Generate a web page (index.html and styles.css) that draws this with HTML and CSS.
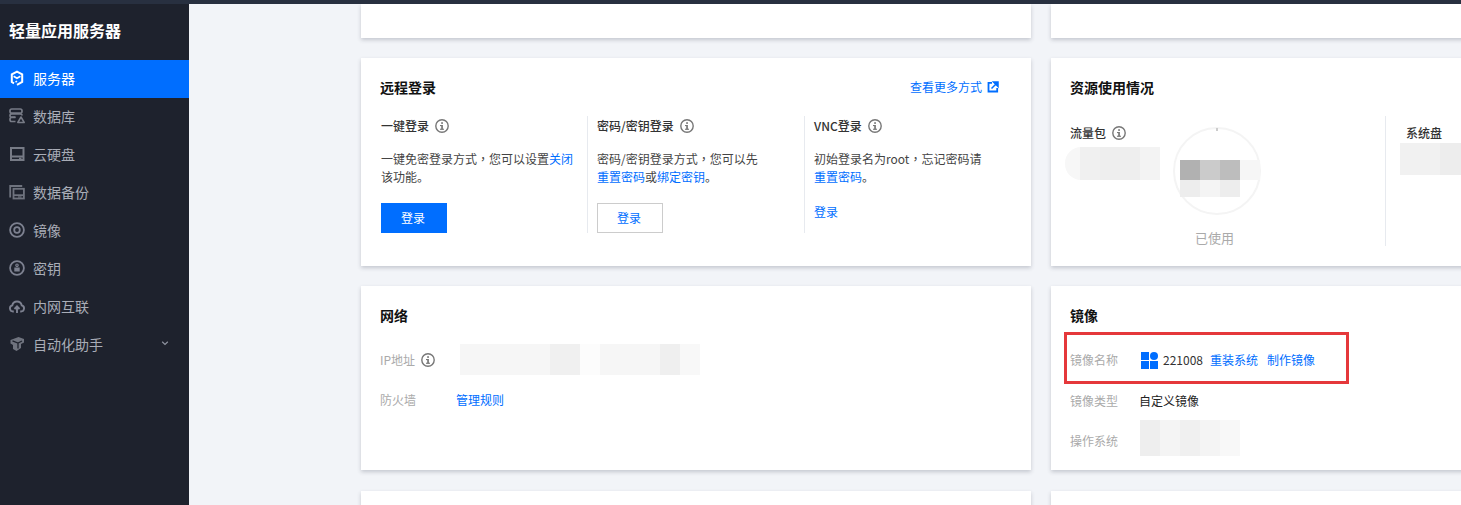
FILE: index.html
```html
<!DOCTYPE html>
<html lang="zh-CN">
<head>
<meta charset="utf-8">
<title>轻量应用服务器</title>
<link rel="stylesheet" href="styles.css">
</head>
<body>
<div class="topbar"></div>
<div class="shell">
  <aside class="sidebar">
    <h1 class="brand">轻量应用服务器</h1>
    <nav class="nav">
      <a class="nav-item active">
        <svg class="nav-icon" viewBox="0 0 16 16" fill="none" stroke="#fff" stroke-width="2"><path d="M5 13.300 2.800 12V4.400L8 1.600l5.200 2.800V12L8 14.800"/><path d="M4.600 6.200 8 8.200l3.400-2" stroke-width="1.600"/><path d="M6.500 12.200 8 11.200" stroke-width="1.600"/></svg>
        <span>服务器</span>
      </a>
      <a class="nav-item">
        <svg class="nav-icon" viewBox="0 0 16 16" fill="none" stroke="#777b86" stroke-width="1.700"><rect x="1" y="1" width="12" height="4.200" rx="1.700"/><path d="M13 7.500a1.700 1.700 0 0 0-1.700-1.700H2.700A1.700 1.700 0 0 0 1 7.500v0a1.700 1.700 0 0 0 1.700 1.700h3.800"/><path d="M6.500 9.500H2.700A1.700 1.700 0 0 0 1 11.200v.6a1.700 1.700 0 0 0 1.700 1.700h3.800"/><path d="M12 9 15.200 14.500H8.800Z" stroke-width="1.500" stroke-linejoin="round"/></svg>
        <span>数据库</span>
      </a>
      <a class="nav-item">
        <svg class="nav-icon" viewBox="0 0 16 16" fill="none" stroke="#777b86" stroke-width="2"><rect x="2" y="2" width="12.500" height="12"/><path d="M2 10.500h12.500"/><path d="M10 12.300h2.500" stroke-width="1.400"/></svg>
        <span>云硬盘</span>
      </a>
      <a class="nav-item">
        <svg class="nav-icon" viewBox="0 0 16 16" fill="none" stroke="#6f737e" stroke-width="1.800"><path d="M1.200 13.500V2h12"/><rect x="4.500" y="4.800" width="10.400" height="9.700"/><path d="M4.500 11.200h10.400"/><path d="M9 13h3.500" stroke-width="1.200"/></svg>
        <span>数据备份</span>
      </a>
      <a class="nav-item">
        <svg class="nav-icon" viewBox="0 0 16 16" fill="none" stroke="#7d8190" stroke-width="1.800"><circle cx="8" cy="8" r="6.900"/><circle cx="8" cy="8" r="2.800"/></svg>
        <span>镜像</span>
      </a>
      <a class="nav-item">
        <svg class="nav-icon" viewBox="0 0 16 16" fill="none" stroke="#7d8190" stroke-width="1.800"><circle cx="8" cy="8" r="6.900"/><circle cx="8" cy="5.200" r="1.200" stroke-width="1.200"/><rect x="5.300" y="7.500" width="5.400" height="4" fill="#7d8190" stroke="none"/></svg>
        <span>密钥</span>
      </a>
      <a class="nav-item">
        <svg class="nav-icon" viewBox="0 0 16 16" fill="none" stroke="#7d8190" stroke-width="1.900"><path d="M4.800 13.500H4A3.100 3.100 0 0 1 3.300 7.400 4.800 4.800 0 0 1 12.700 7.400 3.100 3.100 0 0 1 12 13.500H11.200"/><path d="M8 15V8.500M5.500 11 8 8.400l2.500 2.600"/></svg>
        <span>内网互联</span>
      </a>
      <a class="nav-item">
        <svg class="nav-icon" viewBox="0 0 16 16"><path d="M9.500 1 15 3v3.500L12 8v4l-4.500 3L4 13V9L1.500 7.500V4Z" fill="#6f737e"/><path d="M3.500 4.800 9 7l4-2M9 7v5.500" stroke="#1e222d" stroke-width="1.300" fill="none"/></svg>
        <span>自动化助手</span>
        <svg class="nav-caret" viewBox="0 0 8 8"><path d="M1.200 2.800 4 5.500l2.800-2.700" fill="none" stroke="#8f94a0" stroke-width="1.200"/></svg>
      </a>
    </nav>
  </aside>

  <main class="main">
    <div class="grid">
      <section class="card card-top"></section>
      <section class="card card-top"></section>

      <section class="card card-login">
        <header class="card-head">
          <h2 class="card-title">远程登录</h2>
          <a class="link more">查看更多方式
            <svg class="ext" viewBox="0 0 12 12"><path d="M5 1.800H1.500v8.700h8.700V7" fill="none" stroke="#006eff" stroke-width="1.800"/><path d="M6.500 1H11v4.500ZM8.500 3.500 4.500 7.500" fill="#006eff" stroke="#006eff" stroke-width="1.500"/></svg>
          </a>
        </header>
        <div class="login-cols">
          <div class="login-col">
            <h3 class="sub">一键登录 <svg class="info" viewBox="0 0 14 14"><use href="#i"/></svg></h3>
            <p class="desc">一键免密登录方式<span class="comma" lang="zh-TW">，</span>您可以设置<a class="link">关闭</a>该功能。</p>
            <button class="btn btn-primary">登录</button>
          </div>
          <div class="login-col">
            <h3 class="sub">密码/密钥登录 <svg class="info" viewBox="0 0 14 14"><use href="#i"/></svg></h3>
            <p class="desc">密码/密钥登录方式<span class="comma" lang="zh-TW">，</span>您可以先<br><a class="link">重置密码</a>或<a class="link">绑定密钥</a>。</p>
            <button class="btn btn-outline">登录</button>
          </div>
          <div class="login-col">
            <h3 class="sub">VNC登录 <svg class="info" viewBox="0 0 14 14"><use href="#i"/></svg></h3>
            <p class="desc">初始登录名为root<span class="comma" lang="zh-TW">，</span>忘记密码请<br><a class="link">重置密码</a>。</p>
            <a class="link text-btn">登录</a>
          </div>
        </div>
      </section>

      <section class="card card-usage">
        <h2 class="card-title">资源使用情况</h2>
        <div class="usage-cols">
          <div class="usage-col">
            <h3 class="sub tight">流量包 <svg class="info" viewBox="0 0 14 14"><use href="#i"/></svg></h3>
            <div class="ring"></div>
            <div class="ring-label">已使用</div>
            <div class="mosaic m-traffic"><i></i><i></i><i></i><i></i></div>
            <div class="mosaic m-center">
              <i class="g1"></i><i class="g2"></i><i class="g3"></i><i class="g4"></i>
              <i class="g5"></i><i class="g6"></i><i class="g7"></i><i class="g8"></i>
            </div>
          </div>
          <div class="usage-col usage-side">
            <h3 class="sub tight">系统盘</h3>
            <div class="mosaic m-disk"><i></i><i></i><i></i></div>
          </div>
        </div>
      </section>

      <section class="card card-net">
        <h2 class="card-title">网络</h2>
        <dl class="rows">
          <div class="row row-ip">
            <dt>IP地址 <svg class="info" viewBox="0 0 14 14"><use href="#i"/></svg></dt>
            <dd class="mosaic m-ip"><i></i><i></i><i></i><i></i><i></i><i></i><i></i><i></i></dd>
          </div>
          <div class="row row-fw">
            <dt>防火墙</dt>
            <dd><a class="link">管理规则</a></dd>
          </div>
        </dl>
      </section>

      <section class="card card-image">
        <h2 class="card-title">镜像</h2>
        <dl class="rows rows-image">
          <div class="row row-img">
            <dt>镜像名称</dt>
            <dd class="img-name">
              <svg class="win" viewBox="0 0 17 17"><rect x="0" y="0" width="8" height="8" fill="#006eff"/><circle cx="13" cy="4" r="4" fill="#006eff"/><rect x="0" y="9" width="8" height="8" fill="#006eff"/><rect x="9" y="9" width="8" height="8" fill="#006eff"/></svg>
              <span>221008</span><a class="link">重装系统</a><a class="link">制作镜像</a>
            </dd>
            <div class="highlight"></div>
          </div>
          <div class="row"><dt>镜像类型</dt><dd class="plain">自定义镜像</dd></div>
          <div class="row">
            <dt>操作系统</dt>
            <dd class="mosaic m-os"><i></i><i></i><i></i><i></i><i></i></dd>
          </div>
        </dl>
      </section>

      <section class="card card-bottom"></section>
      <section class="card card-bottom"></section>
    </div>
  </main>
</div>
<svg class="defs" width="0" height="0"><defs><g id="i"><circle cx="7" cy="7" r="6.200" fill="none" stroke="#777" stroke-width="1.400"/><rect x="6.200" y="6" width="1.700" height="4.500" fill="#777"/><rect x="6.200" y="3.200" width="1.700" height="1.700" fill="#777"/><rect x="5" y="6" width="2" height="1.100" fill="#777"/><rect x="5" y="9.700" width="4" height="1.100" fill="#777"/></g></defs></svg>
</body>
</html>
```
FILE: styles.css
```css
* { box-sizing: border-box; margin: 0; padding: 0; }
html, body { height: 100%; overflow: hidden; }
body {
  font-family: "Noto Sans CJK SC", "Liberation Sans", sans-serif;
  font-size: 12px;
  line-height: 18px;
  color: #333;
  background: #f2f4f8;
  display: flex;
  flex-direction: column;
}
.defs { position: absolute; }
.topbar { height: 4px; background: #283040; flex: none; }
.shell { flex: 1; display: flex; min-height: 0; }

.sidebar { width: 189px; flex: none; background: #1e222d; }
.brand {
  height: 56px;
  padding-left: 9px;
  font-size: 16px;
  line-height: 52px;
  font-weight: 700;
  color: #fff;
}
.nav-item {
  height: 38px;
  display: flex;
  align-items: center;
  padding: 0 0 2px 9px;
  gap: 8px;
  font-size: 14px;
  color: #a9adb7;
}
.nav-item.active { background: #006eff; color: #fff; }
.nav-icon { width: 16px; height: 16px; flex: none; }
.nav-caret { width: 8px; height: 8px; margin-left: auto; margin-right: 20px; margin-top: -3px; }

.main { flex: 1; min-width: 0; overflow: hidden; padding-left: 172px; }
.grid {
  display: grid;
  grid-template-columns: 670px 480px;
  grid-template-rows: 34px 208px 184px 60px;
  column-gap: 20px;
  row-gap: 20px;
}
.card {
  background: #fff;
  box-shadow: 0 2px 4px rgba(54, 58, 80, .24);
  padding: 19px 20px 0 19px;
  position: relative;
}
.card-bottom { margin-top: 1px; }
.card-title { font-size: 14px; line-height: 20px; font-weight: 700; color: #111; }
.card-head { display: flex; justify-content: space-between; align-items: center; }
.link { color: #006eff; text-decoration: none; }
.more { display: flex; align-items: center; gap: 5px; margin-right: 12px; }
.ext { width: 12px; height: 12px; }
.comma { font-family: "Noto Sans CJK TC", sans-serif; }

.login-cols { display: grid; grid-template-columns: 206px 217px 200px; margin: 19px 0 0 1px; }
.login-col { padding-left: 9px; border-left: 1px solid #e7eaef; height: 117px; }
.login-col:first-child { padding-left: 0; border-left: 0; }
.sub { font-size: 12px; line-height: 18px; font-weight: 500; color: #333; display: flex; align-items: center; gap: 6px; margin-top: 1px; }
.info { width: 14px; height: 14px; flex: none; }
.desc { margin-top: 15px; width: 193px; height: 36px; color: #444; }
.btn { display: block; width: 66px; height: 30px; margin-top: 17px; padding-right: 2px; font: inherit; cursor: pointer; }
.btn-primary { background: #006eff; color: #fff; border: 0; }
.btn-outline { background: #fff; color: #006eff; border: 1px solid #ccc; }
.text-btn { display: block; margin-top: 17px; }

.usage-cols { display: flex; margin-top: 19px; }
.usage-col { position: relative; width: 316px; height: 130px; border-right: 1px solid #e7eaef; }
.usage-side { border-right: 0; padding-left: 20px; width: 100px; }
.sub.tight { margin-top: 8px; }
.ring {
  position: absolute;
  left: 103px;
  top: 11px;
  width: 88px;
  height: 88px;
  border: 2px solid #f4f4f4;
  border-radius: 50%;
}
.ring::before {
  content: "";
  position: absolute;
  left: 41px;
  top: -1px;
  width: 2px;
  height: 3px;
  background: #ccc;
}
.ring-label { position: absolute; left: 125px; top: 113px; font-size: 13px; color: #aaa; }

.mosaic { display: flex; }
.mosaic i { display: block; width: 20px; height: 100%; background: #f2f2f2; }
.m-traffic { position: absolute; left: -5px; top: 31px; height: 33px; border-radius: 16px 0 0 16px; overflow: hidden; }
.m-traffic i { width: 20px; background: #f0f0f0; }
.m-traffic i:first-child { width: 15px; background: #f7f7f7; }
.m-traffic i:nth-child(3) { width: 40px; background: #eee; }
.m-traffic i:nth-child(4) { width: 20px; background: #f3f3f3; }
.m-center { position: absolute; left: 110px; top: 44px; width: 80px; height: 37px; flex-wrap: wrap; }
.m-center i { height: 20px; }
.m-center .g1 { background: #b1b1b1; }
.m-center .g2 { background: #cbcbcb; }
.m-center .g3 { background: #bdbdbd; }
.m-center .g4 { background: #f6f6f6; }
.m-center .g5, .m-center .g6, .m-center .g7, .m-center .g8 { height: 17px; }
.m-center .g5 { background: #ededed; }
.m-center .g6 { background: #f4f4f4; }
.m-center .g7 { background: #ededed; }
.m-center .g8 { background: transparent; }
.m-disk { position: absolute; left: 14px; top: 27px; height: 32px; }
.m-disk i { background: #f1f1f1; }
.m-disk i:nth-child(3) { background: #ededed; width: 21px; }

.rows { margin-top: 19px; }
.row { display: flex; align-items: center; height: 18px; position: relative; }
.row dt { width: 76px; color: #aaa; display: flex; align-items: center; gap: 4px; flex: none; }
.row dd { color: #333; }
.row-ip { height: 31px; }
.row-ip .info { margin-left: 2px; }
.row-fw { margin-top: 16px; }
.m-ip { height: 31px; width: 240px; margin-left: 4px; }
.m-ip i { width: 30px; background: #f6f6f6; }
.m-ip i:nth-child(4) { background: #f0f0f0; }
.m-ip i:nth-child(5) { background: #fcfcfc; width: 20px; }
.m-ip i:nth-child(6) { width: 60px; }
.m-ip i:nth-child(7) { background: #efefef; width: 20px; }
.m-ip i:nth-child(8) { background: #f8f8f8; width: 20px; }

.rows-image { margin-top: 26px; }
.rows-image .row { margin-bottom: 22px; }
.rows-image .row-img { margin-bottom: 23px; }
.rows-image .row dt { width: 69px; }
.img-name { display: flex; align-items: center; gap: 8px; margin-left: 2px; }
.img-name span { margin: 0 -1px 0 -3px; }
.img-name a:last-child { margin-left: 1px; }
.row .plain { margin-left: 0; color: #222; }
.win { width: 17px; height: 17px; }
.highlight {
  position: absolute;
  left: -6px;
  top: -19px;
  width: 285px;
  height: 52px;
  border: 3px solid #e5383b;
  pointer-events: none;
}
.m-os { height: 36px; width: 100px; margin: -6px 0 0 1px; }
.m-os i { background: #f4f4f4; }
.m-os i:first-child { background: #eeeeee; }
.m-os i:nth-child(3) { background: #f0f0f0; }
.m-os i:nth-child(5) { background: #f8f8f8; }
```
